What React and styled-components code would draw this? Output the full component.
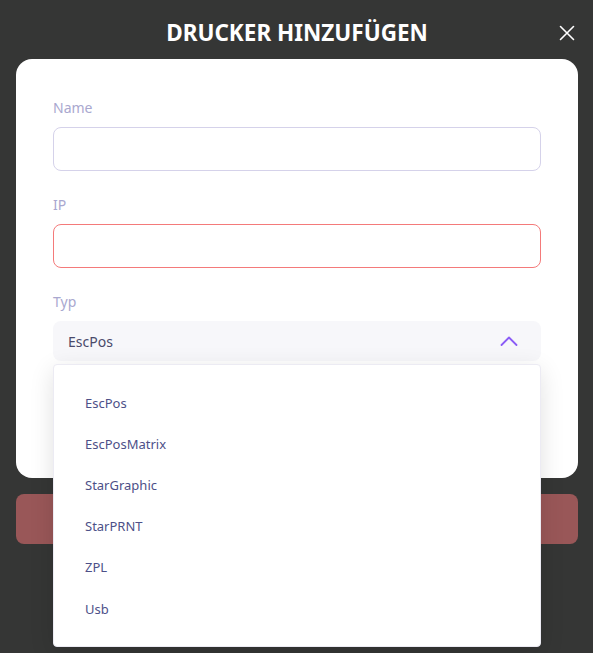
import React from 'react'
import styled, { createGlobalStyle } from 'styled-components'

const GlobalStyle = createGlobalStyle`
  * { box-sizing: border-box; }
  body {
    margin: 0;
    background: #353635;
    font-family: "Noto Sans", "Open Sans", sans-serif;
  }
`

const printerTypes = [
   "EscPos",
   "EscPosMatrix",
   "StarGraphic",
   "StarPRNT",
   "ZPL",
   "Usb",
]

const Page = styled.div`
  min-height: 100vh;
  padding: 0 15px 0 16px;
  overflow: hidden;
`
const Header = styled.div`
  display: grid;
  grid-template-columns: 1fr auto 1fr;
  align-items: center;
  height: 59px;
  padding-top: 6px;
`
const Title = styled.h1`
  grid-column: 2;
  margin: 0;
  color: #fff;
  font-size: 22.5px;
  font-weight: 700;
  letter-spacing: 0;
`
const CloseButton = styled.button`
  justify-self: end;
  margin-right: 3px;
  border: none;
  background: none;
  padding: 0;
  width: 16px;
  height: 16px;
  display: flex;
  cursor: pointer;
`
const Card = styled.div`
  background: #fff;
  border-radius: 16px;
  padding: 39px 37px 117px;
  display: flex;
  flex-direction: column;
`
const Field = styled.div`
  display: flex;
  flex-direction: column;
  gap: 9px;
  margin-bottom: 24px;
  position: relative;
  &:last-child { margin-bottom: 0; }
`
const Label = styled.label`
  font-size: 14px;
  line-height: 20px;
  color: #a9a8cf;
`
const Input = styled.input`
  height: 44px;
  border-radius: 8px;
  border: 1px solid ${p => (p.$error ? '#f47a7a' : '#d5d2ea')};
  background: #fff;
  outline: none;
  padding: 0 14px;
  font: inherit;
`
const Select = styled.div`
  height: 40px;
  border-radius: 8px;
  background: #f7f7fa;
  display: flex;
  align-items: center;
  justify-content: space-between;
  padding: 0 23px 0 15px;
  font-size: 14px;
  color: #4a4a6a;
`
const Menu = styled.ul`
  position: absolute;
  left: 0;
  right: 0;
  top: calc(100% + 3px);
  margin: 0;
  padding: 17px 0 17px;
  list-style: none;
  background: #fff;
  border: 1px solid #ecebf3;
  border-radius: 4px;
  box-shadow: 0 6px 24px rgba(0, 0, 0, 0.12);
  z-index: 10;
`
const MenuItem = styled.li`
  height: 41.2px;
  display: flex;
  align-items: center;
  padding-left: 31px;
  font-size: 13px;
  color: #4d5088;
`
const SubmitButton = styled.button`
  margin-top: 16px;
  width: 100%;
  height: 50px;
  border: none;
  border-radius: 8px;
  background: #995758;
  color: #fff;
  font: inherit;
  font-size: 15px;
  font-weight: 700;
`

const App = () => {
   return (
      <Page>
         <GlobalStyle />
         <Header>
            <Title>DRUCKER HINZUFÜGEN</Title>
            <CloseButton aria-label="Schließen">
               <svg width="16" height="16" viewBox="0 0 16 16">
                  <path d="M1.5 1.5 L14.5 14.5 M14.5 1.5 L1.5 14.5" stroke="#fff" strokeWidth="1.6" strokeLinecap="round" />
               </svg>
            </CloseButton>
         </Header>
         <Card>
            <Field>
               <Label>Name</Label>
               <Input />
            </Field>
            <Field>
               <Label>IP</Label>
               <Input $error />
            </Field>
            <Field>
               <Label>Typ</Label>
               <Select>
                  EscPos
                  <svg width="18" height="10" viewBox="0 0 18 10">
                     <path d="M1.5 9 L9 1.5 L16.5 9" fill="none" stroke="#8b5cf6" strokeWidth="1.8" strokeLinecap="round" strokeLinejoin="round" />
                  </svg>
               </Select>
               <Menu>
                  {printerTypes.map(item => (
                     <MenuItem key={item}>{item}</MenuItem>
                  ))}
               </Menu>
            </Field>
         </Card>
         <SubmitButton>Speichern</SubmitButton>
      </Page>
   )
}

export default App
